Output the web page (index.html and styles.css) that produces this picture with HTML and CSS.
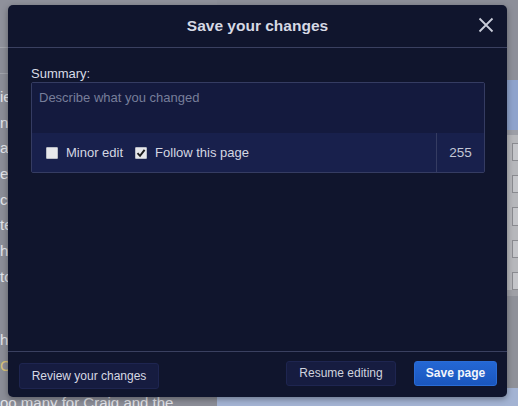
FILE: index.html
```html
<!DOCTYPE html>
<html>
<head>
<meta charset="utf-8">
<link rel="stylesheet" href="styles.css">
</head>
<body>
<div class="page">
  <div class="article">
    <div class="topbar"></div>
    <div class="subbar"></div>
    <p class="line">ie</p>
    <p class="line">nl</p>
    <p class="line">ab</p>
    <p class="line">er</p>
    <p class="line">ca</p>
    <p class="line">te</p>
    <p class="line">h</p>
    <p class="line">tc</p>
    <p class="line gap">hi</p>
    <p class="line gold">C</p>
    <p class="line last">oo many for Craig and the</p>
  </div>
  <div class="side">
    <div class="side-top"></div>
    <div class="side-blue"></div>
    <div class="side-form">
      <span class="box"></span><span class="box"></span><span class="box"></span><span class="box"></span><span class="box"></span>
    </div>
    <div class="side-rest"></div>
    <div class="side-foot"></div>
  </div>
</div>
<div class="dialog">
  <div class="dialog-head">
    <span class="dialog-title">Save your changes</span>
    <span class="close">
      <svg width="16" height="16" viewBox="0 0 16 16"><path d="M1.5 1.5 L14.5 14.5 M14.5 1.5 L1.5 14.5" stroke="#c9cdd9" stroke-width="1.8" fill="none"/></svg>
    </span>
  </div>
  <div class="dialog-body">
    <label class="summary-label">Summary:</label>
    <div class="summary">
      <div class="summary-input">Describe what you changed</div>
      <div class="summary-bar">
        <div class="checks">
          <span class="check"><span class="cb"></span>Minor edit</span>
          <span class="check"><span class="cb on"><svg width="10" height="10" viewBox="0 0 10 10"><path d="M1.5 5.2 L4 7.8 L8.6 1.8" stroke="#1c1c1c" stroke-width="1.9" fill="none"/></svg></span>Follow this page</span>
        </div>
        <div class="count">255</div>
      </div>
    </div>
  </div>
  <div class="dialog-foot">
    <button class="btn review">Review your changes</button>
    <div class="right-btns">
      <button class="btn resume">Resume editing</button>
      <button class="btn save">Save page</button>
    </div>
  </div>
</div>
</body>
</html>
```
FILE: styles.css
```css
html, body {
  margin: 0;
  padding: 0;
  width: 518px;
  height: 406px;
  overflow: hidden;
  font-family: "Liberation Sans", Arial, sans-serif;
}
body {
  background: #8b8d97;
  position: relative;
}
.page {
  display: flex;
  height: 406px;
}
.article {
  flex: 1;
  display: flex;
  flex-direction: column;
  color: #e4e5ea;
  font-size: 15px;
  overflow: hidden;
}
.article > * { flex-shrink: 0; }
.topbar {
  height: 47px;
  background: #8f919b;
  border-bottom: 1px solid #a3a5ad;
}
.subbar {
  height: 25px;
  border-bottom: 1px solid #a0a2aa;
  margin-bottom: 10px;
}
.line {
  margin: 0;
  height: 25.7px;
  line-height: 25.7px;
  white-space: nowrap;
}
.line.gap {
  margin-top: 37px;
}
.line.gold { color: #d9c27a; height: 28px; line-height: 28px; }
.line.last { margin-top: 10px; }
.side {
  width: 301px;
  display: flex;
  flex-direction: column;
}
.side-top { height: 80px; background: #8d8f99; }
.side-blue { height: 50px; background: #8fa3cc; border-bottom: 5px solid #9c9ea6; }
.side-form {
  height: 155px;
  background: #b6b7bb;
  display: flex;
  flex-direction: column;
  align-items: flex-end;
  gap: 14px;
  padding-top: 8px;
  box-sizing: border-box;
}
.box { display: block; width: 6px; height: 22px; border: 1px solid #8a8b90; background: #c4c5c9; margin-right: -2px; }
.side-rest { flex: 1; background: #8f9199; border-top: 6px solid #9fa0a6; }
.side-foot { height: 18px; background: #a3b3d3; }

.dialog {
  position: absolute;
  left: 8px;
  top: 5px;
  width: 499px;
  height: 392px;
  background: #10152d;
  border-radius: 5px;
  box-shadow: 0 2px 6px rgba(0,0,0,0.35);
  display: flex;
  flex-direction: column;
  color: #d4d7e2;
}
.dialog-head {
  height: 42px;
  border-bottom: 1px solid #3a4060;
  display: flex;
  align-items: center;
  justify-content: center;
  position: relative;
}
.dialog-title {
  font-weight: bold;
  font-size: 15.5px;
  color: #d6d9e4;
}
.close {
  position: absolute;
  right: 13px;
  top: 12px;
  width: 16px;
  height: 16px;
  display: flex;
}
.dialog-body {
  flex: 1;
  padding: 18px 22px 0 23px;
}
.summary-label {
  display: block;
  font-size: 13px;
  color: #d8dbe6;
  margin-bottom: 1px;
  line-height: 15px;
}
.summary {
  border: 1px solid #353c62;
  border-radius: 2px;
  display: flex;
  flex-direction: column;
}
.summary-input {
  height: 50px;
  background: #141a3e;
  color: #777e9a;
  font-size: 13px;
  padding: 7px 7px 0;
  box-sizing: border-box;
}
.summary-bar {
  height: 39px;
  background: #18204c;
  display: flex;
  align-items: stretch;
}
.checks {
  flex: 1;
  display: flex;
  align-items: center;
  gap: 12px;
  padding-left: 14px;
  font-size: 13px;
  color: #d4d7e2;
}
.check {
  display: flex;
  align-items: center;
  gap: 8px;
}
.cb {
  width: 10px;
  height: 10px;
  background: #e6e7ea;
  border: 1px solid #b9bcc6;
  border-radius: 1px;
  display: flex;
  align-items: center;
  justify-content: center;
}
.count {
  width: 47px;
  border-left: 1px solid #353c62;
  display: flex;
  align-items: center;
  justify-content: center;
  font-size: 13.5px;
  color: #c3c7d6;
}
.dialog-foot {
  border-top: 1px solid #3a4060;
  height: 45px;
  display: flex;
  align-items: center;
  justify-content: space-between;
  padding: 0 10px 0 11px;
}
.right-btns {
  display: flex;
  gap: 18px;
  margin-top: -3px;
}
.btn {
  font-family: "Liberation Sans", Arial, sans-serif;
  font-size: 12px;
  height: 25px;
  border-radius: 3px;
  padding: 0;
  white-space: nowrap;
  cursor: pointer;
}
.review {
  background: #161c40;
  border: 1px solid #1e2550;
  color: #d6d9e4;
  width: 140px;
  height: 26px;
  margin-top: 3px;
}
.resume {
  background: #161c40;
  border: 1px solid #1e2550;
  color: #d0d3de;
  width: 110px;
}
.save {
  background: linear-gradient(#2467d4, #1a56be);
  border: 1px solid #2a6cd6;
  color: #f2f5fb;
  font-weight: bold;
  width: 83px;
}
```
